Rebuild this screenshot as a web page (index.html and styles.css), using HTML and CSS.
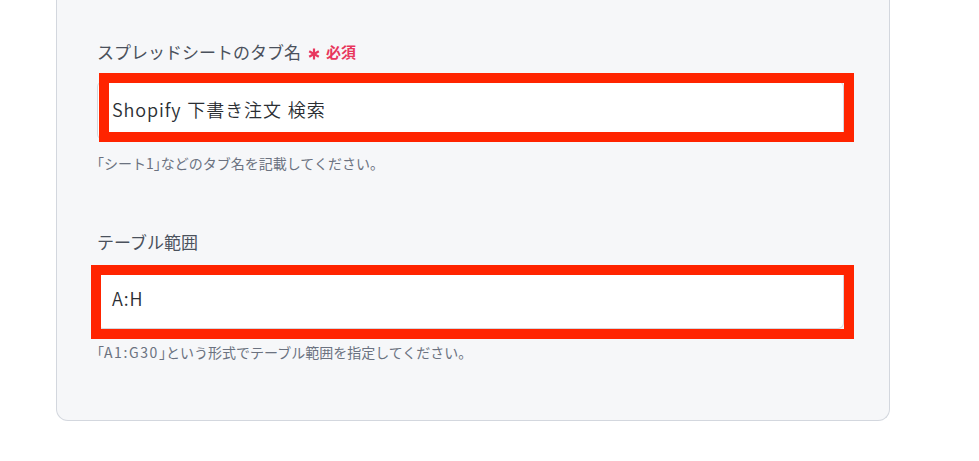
FILE: index.html
```html
<!DOCTYPE html>
<html lang="ja">
<head>
<meta charset="utf-8">
<link rel="stylesheet" href="styles.css">
</head>
<body>
<div class="panel">
  <div class="field">
    <div class="label">スプレッドシートのタブ名<span class="req"><svg class="ast" width="12" height="12" viewBox="0 0 12 12"><g stroke="currentColor" stroke-width="2.2" stroke-linecap="butt"><line x1="6" y1="0.5" x2="6" y2="11.5"/><line x1="1.2" y1="3.25" x2="10.8" y2="8.75"/><line x1="1.2" y1="8.75" x2="10.8" y2="3.25"/></g></svg>必須</span></div>
    <div class="input-wrap">
      <div class="input">Shopify 下書き注文 検索</div>
      <div class="mark mark-1"></div>
    </div>
    <div class="help"><span class="br">「</span>シート1<span class="br">」</span>などのタブ名を記載してください。</div>
  </div>
  <div class="field field-2">
    <div class="label">テーブル範囲</div>
    <div class="input-wrap">
      <div class="input">A:H</div>
      <div class="mark mark-2"></div>
    </div>
    <div class="help"><span class="br">「</span><span class="lat">A1:G30</span><span class="br">」</span>という形式でテーブル範囲を指定してください。</div>
  </div>
</div>
</body>
</html>
```

FILE: styles.css
```css
html, body {
  margin: 0;
  padding: 0;
  background: #ffffff;
}
body {
  font-family: "Noto Sans CJK JP", "Noto Sans", sans-serif;
  width: 979px;
  height: 461px;
  overflow: hidden;
}
.panel {
  box-sizing: border-box;
  margin-left: 56px;
  width: 834px;
  background: #f6f7f9;
  border: 1px solid #d3d7de;
  border-top: none;
  border-radius: 0 0 12px 12px;
  padding: 40px 45px 58px 40px;
}
.field-2 {
  margin-top: 57px;
}
.label {
  font-size: 17px;
  line-height: 24px;
  font-weight: 400;
  color: #4a515c;
  display: flex;
  align-items: center;
}
.req {
  margin-left: 7px;
  color: #e8365d;
  font-size: 15px;
  font-weight: 700;
  display: flex;
  align-items: center;
}
.ast {
  display: block;
  margin-right: 6px;
  margin-top: 3px;
}
.input-wrap {
  position: relative;
  margin-top: 17px;
}
.field-2 .input-wrap {
  margin-top: 16px;
}
.input {
  box-sizing: border-box;
  height: 59px;
  background: #ffffff;
  border: 1px solid #d3d7de;
  border-radius: 6px;
  padding: 0 14px;
  display: flex;
  align-items: center;
  padding-bottom: 3px;
  font-size: 18px;
  letter-spacing: 0.9px;
  word-spacing: 1px;
  font-weight: 350;
  color: #2a2e33;
}
.mark {
  position: absolute;
  border: 10px solid #ff2400;
  box-sizing: border-box;
}
.mark-1 {
  left: 2px;
  top: -8px;
  width: 755px;
  height: 69px;
}
.mark-2 {
  left: -6px;
  top: -5px;
  width: 763px;
  height: 74px;
}
.help {
  margin-top: 13px;
  font-size: 14px;
  line-height: 20px;
  color: #6b7280;
}
.br {
  font-feature-settings: "halt";
}
.lat {
  letter-spacing: 1.6px;
}
```
